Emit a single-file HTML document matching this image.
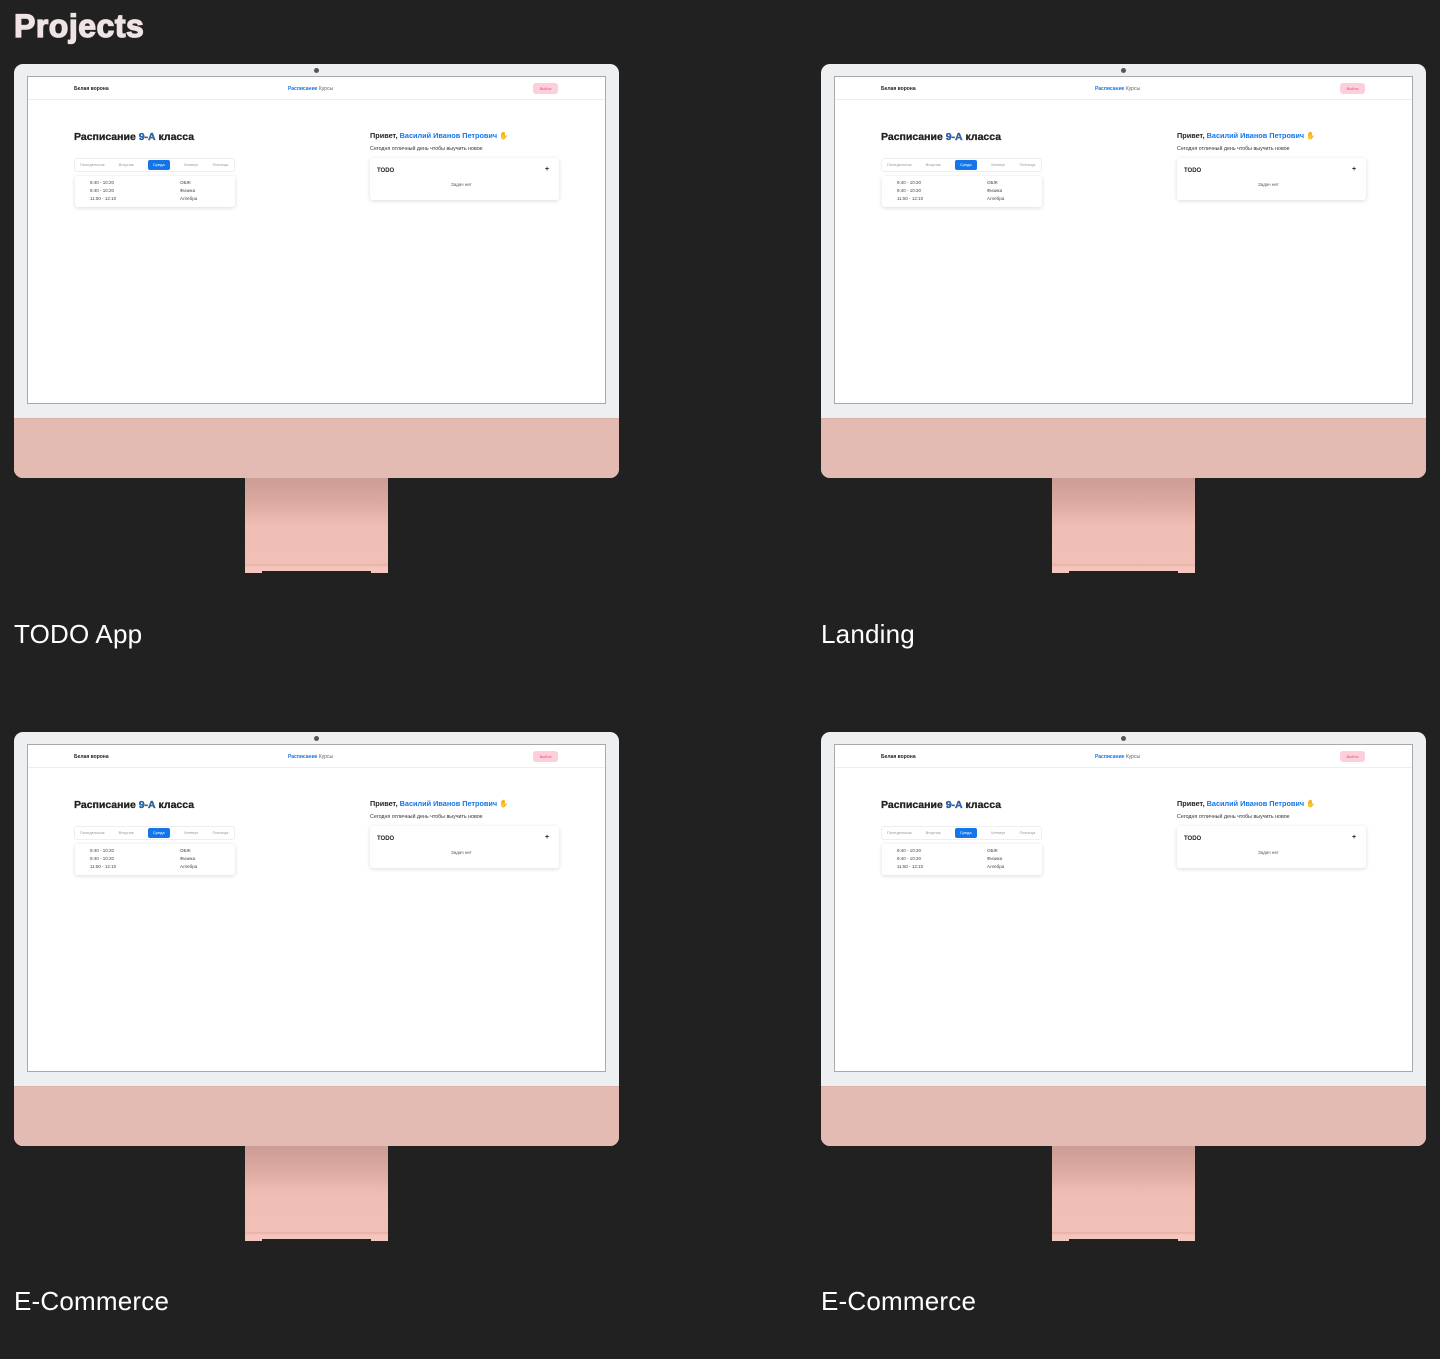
<!DOCTYPE html>
<html><head><meta charset="utf-8"><style>
*{margin:0;padding:0;box-sizing:border-box}
body{width:1440px;height:1359px;background:#212121;position:relative;overflow:hidden;font-family:"Liberation Sans",sans-serif}
.h1{position:absolute;left:14px;top:8px;font-size:32px;font-weight:bold;color:#efe3e3;-webkit-text-stroke:1.3px #efe3e3;letter-spacing:0.5px}
.lbl{position:absolute;font-size:26px;color:#fff;letter-spacing:0.2px}
.m{position:absolute;width:605px;height:510px}
.frame{position:absolute;left:0;top:0;width:605px;height:414px;border-radius:9px;background:#eeeff1;overflow:hidden}
.chin{position:absolute;left:0;top:354px;width:605px;height:60px;background:#e3bbb3;border-top:1px solid #dcb3ab}
.cam{position:absolute;left:300px;top:4px;width:5px;height:5px;border-radius:50%;background:#555}
.scr{position:absolute;left:13px;top:12px;width:579px;height:328px;background:#fff;border:1px solid #a9a9a9;font-size:5px;color:#222}
.stand{position:absolute;left:231px;top:414px;width:143px;height:95px;background:linear-gradient(#cc9d95,#dba99f 25%,#efbdb3 50%,#f0c0b6 90%,#e8b0a6 91%,#f4c7be 94%)}
.stand:after{content:"";position:absolute;left:17px;right:17px;bottom:0;height:2px;background:#212121}
.s{position:absolute;white-space:nowrap;font-weight:bold}
.b{color:#1475e9}
.t{left:46px;top:54px;font-size:10.5px;-webkit-text-stroke:0.3px #222}
.g{left:342px;top:54px;font-size:7.3px}
.tabs{position:absolute;left:46px;top:81px;width:161px;height:14px;border:1px solid #eee;border-radius:3px;color:#999;font-size:4px;line-height:12px;padding-left:5px;word-spacing:13px;white-space:nowrap;overflow:hidden}
</style></head><body>
<div class="h1">Projects</div>

<div class="m" style="left:14px;top:64px">
<div class="frame"><div class="chin"></div><div class="cam"></div>
<div class="scr">
<div class="s" style="left:46px;top:9px">Белая ворона</div>
<div class="s b" style="left:260px;top:9px">Расписание <span style="color:#666;font-weight:normal">Курсы</span></div>
<div style="position:absolute;left:505px;top:6px;width:25px;height:11px;background:#fccfdb;border-radius:3px;color:#e0507a;font-size:4px;text-align:center;line-height:11px">Выйти</div>
<div style="position:absolute;left:0;right:0;top:22px;height:1px;background:#eee"></div>
<div class="s t">Расписание <span class="b">9-А</span> класса</div>
<div class="tabs">Понедельник Вторник <span style="display:inline-block;width:22px;height:10px;background:#1475e9;color:#fff;border-radius:2px;line-height:10px;text-align:center;word-spacing:0">Среда</span> Четверг Пятница</div>
<div style="position:absolute;left:47px;top:99px;width:160px;height:31px;box-shadow:0 1px 4px rgba(0,0,0,.15);border-radius:3px;font-size:4.5px;line-height:8px;color:#444;padding:3px 0 0 15px">9:40 - 10:20<br>9:40 - 10:20<br>11:50 - 12:10</div>
<div style="position:absolute;left:152px;top:102px;font-size:4.5px;line-height:8px;color:#444">ОБЖ<br>Физика<br>Алгебра</div>
<div class="s g">Привет, <span class="b">Василий Иванов Петрович</span> <span style="color:#f2b33d">✋</span></div>
<div class="s" style="left:342px;top:69px;font-size:5.3px;font-weight:normal;color:#333">Сегодня отличный день чтобы выучить новое</div>
<div style="position:absolute;left:342px;top:81px;width:189px;height:42px;box-shadow:0 1px 4px rgba(0,0,0,.15);border-radius:3px"></div>
<div class="s" style="left:349px;top:91px;font-size:6px">TODO</div>
<div class="s" style="left:517px;top:89px;font-size:7px">+</div>
<div class="s" style="left:423px;top:105px;font-size:4.5px;font-weight:normal;color:#555">Задач нет</div>
</div></div>
<div class="stand"></div></div>

<div class="m" style="left:821px;top:64px">
<div class="frame"><div class="chin"></div><div class="cam"></div>
<div class="scr">
<div class="s" style="left:46px;top:9px">Белая ворона</div>
<div class="s b" style="left:260px;top:9px">Расписание <span style="color:#666;font-weight:normal">Курсы</span></div>
<div style="position:absolute;left:505px;top:6px;width:25px;height:11px;background:#fccfdb;border-radius:3px;color:#e0507a;font-size:4px;text-align:center;line-height:11px">Выйти</div>
<div style="position:absolute;left:0;right:0;top:22px;height:1px;background:#eee"></div>
<div class="s t">Расписание <span class="b">9-А</span> класса</div>
<div class="tabs">Понедельник Вторник <span style="display:inline-block;width:22px;height:10px;background:#1475e9;color:#fff;border-radius:2px;line-height:10px;text-align:center;word-spacing:0">Среда</span> Четверг Пятница</div>
<div style="position:absolute;left:47px;top:99px;width:160px;height:31px;box-shadow:0 1px 4px rgba(0,0,0,.15);border-radius:3px;font-size:4.5px;line-height:8px;color:#444;padding:3px 0 0 15px">9:40 - 10:20<br>9:40 - 10:20<br>11:50 - 12:10</div>
<div style="position:absolute;left:152px;top:102px;font-size:4.5px;line-height:8px;color:#444">ОБЖ<br>Физика<br>Алгебра</div>
<div class="s g">Привет, <span class="b">Василий Иванов Петрович</span> <span style="color:#f2b33d">✋</span></div>
<div class="s" style="left:342px;top:69px;font-size:5.3px;font-weight:normal;color:#333">Сегодня отличный день чтобы выучить новое</div>
<div style="position:absolute;left:342px;top:81px;width:189px;height:42px;box-shadow:0 1px 4px rgba(0,0,0,.15);border-radius:3px"></div>
<div class="s" style="left:349px;top:91px;font-size:6px">TODO</div>
<div class="s" style="left:517px;top:89px;font-size:7px">+</div>
<div class="s" style="left:423px;top:105px;font-size:4.5px;font-weight:normal;color:#555">Задач нет</div>
</div></div>
<div class="stand"></div></div>

<div class="m" style="left:14px;top:732px">
<div class="frame"><div class="chin"></div><div class="cam"></div>
<div class="scr">
<div class="s" style="left:46px;top:9px">Белая ворона</div>
<div class="s b" style="left:260px;top:9px">Расписание <span style="color:#666;font-weight:normal">Курсы</span></div>
<div style="position:absolute;left:505px;top:6px;width:25px;height:11px;background:#fccfdb;border-radius:3px;color:#e0507a;font-size:4px;text-align:center;line-height:11px">Выйти</div>
<div style="position:absolute;left:0;right:0;top:22px;height:1px;background:#eee"></div>
<div class="s t">Расписание <span class="b">9-А</span> класса</div>
<div class="tabs">Понедельник Вторник <span style="display:inline-block;width:22px;height:10px;background:#1475e9;color:#fff;border-radius:2px;line-height:10px;text-align:center;word-spacing:0">Среда</span> Четверг Пятница</div>
<div style="position:absolute;left:47px;top:99px;width:160px;height:31px;box-shadow:0 1px 4px rgba(0,0,0,.15);border-radius:3px;font-size:4.5px;line-height:8px;color:#444;padding:3px 0 0 15px">9:40 - 10:20<br>9:40 - 10:20<br>11:50 - 12:10</div>
<div style="position:absolute;left:152px;top:102px;font-size:4.5px;line-height:8px;color:#444">ОБЖ<br>Физика<br>Алгебра</div>
<div class="s g">Привет, <span class="b">Василий Иванов Петрович</span> <span style="color:#f2b33d">✋</span></div>
<div class="s" style="left:342px;top:69px;font-size:5.3px;font-weight:normal;color:#333">Сегодня отличный день чтобы выучить новое</div>
<div style="position:absolute;left:342px;top:81px;width:189px;height:42px;box-shadow:0 1px 4px rgba(0,0,0,.15);border-radius:3px"></div>
<div class="s" style="left:349px;top:91px;font-size:6px">TODO</div>
<div class="s" style="left:517px;top:89px;font-size:7px">+</div>
<div class="s" style="left:423px;top:105px;font-size:4.5px;font-weight:normal;color:#555">Задач нет</div>
</div></div>
<div class="stand"></div></div>

<div class="m" style="left:821px;top:732px">
<div class="frame"><div class="chin"></div><div class="cam"></div>
<div class="scr">
<div class="s" style="left:46px;top:9px">Белая ворона</div>
<div class="s b" style="left:260px;top:9px">Расписание <span style="color:#666;font-weight:normal">Курсы</span></div>
<div style="position:absolute;left:505px;top:6px;width:25px;height:11px;background:#fccfdb;border-radius:3px;color:#e0507a;font-size:4px;text-align:center;line-height:11px">Выйти</div>
<div style="position:absolute;left:0;right:0;top:22px;height:1px;background:#eee"></div>
<div class="s t">Расписание <span class="b">9-А</span> класса</div>
<div class="tabs">Понедельник Вторник <span style="display:inline-block;width:22px;height:10px;background:#1475e9;color:#fff;border-radius:2px;line-height:10px;text-align:center;word-spacing:0">Среда</span> Четверг Пятница</div>
<div style="position:absolute;left:47px;top:99px;width:160px;height:31px;box-shadow:0 1px 4px rgba(0,0,0,.15);border-radius:3px;font-size:4.5px;line-height:8px;color:#444;padding:3px 0 0 15px">9:40 - 10:20<br>9:40 - 10:20<br>11:50 - 12:10</div>
<div style="position:absolute;left:152px;top:102px;font-size:4.5px;line-height:8px;color:#444">ОБЖ<br>Физика<br>Алгебра</div>
<div class="s g">Привет, <span class="b">Василий Иванов Петрович</span> <span style="color:#f2b33d">✋</span></div>
<div class="s" style="left:342px;top:69px;font-size:5.3px;font-weight:normal;color:#333">Сегодня отличный день чтобы выучить новое</div>
<div style="position:absolute;left:342px;top:81px;width:189px;height:42px;box-shadow:0 1px 4px rgba(0,0,0,.15);border-radius:3px"></div>
<div class="s" style="left:349px;top:91px;font-size:6px">TODO</div>
<div class="s" style="left:517px;top:89px;font-size:7px">+</div>
<div class="s" style="left:423px;top:105px;font-size:4.5px;font-weight:normal;color:#555">Задач нет</div>
</div></div>
<div class="stand"></div></div>

<div class="lbl" style="left:14px;top:619px">TODO App</div>
<div class="lbl" style="left:821px;top:619px">Landing</div>
<div class="lbl" style="left:14px;top:1286px">E-Commerce</div>
<div class="lbl" style="left:821px;top:1286px">E-Commerce</div>
</body></html>
